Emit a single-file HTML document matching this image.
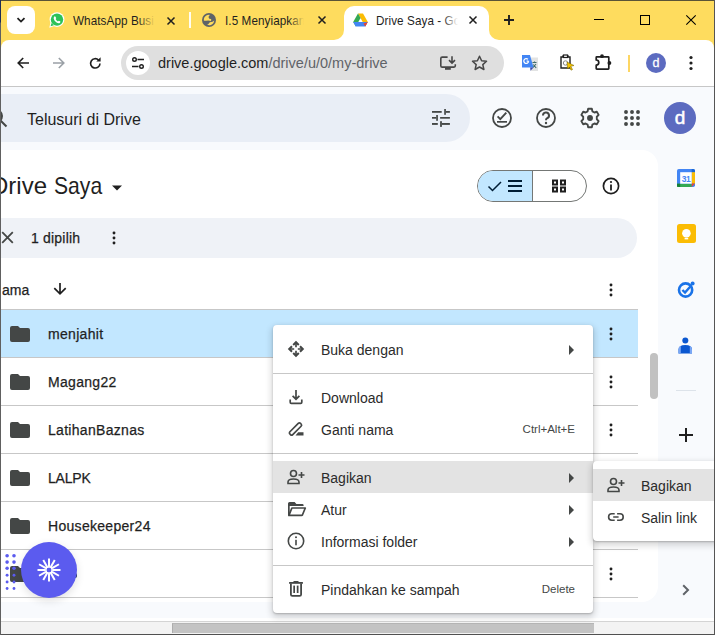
<!DOCTYPE html>
<html><head><meta charset="utf-8">
<style>
*{margin:0;padding:0;box-sizing:border-box}
html,body{width:715px;height:635px;overflow:hidden;background:#f8fafd;font-family:"Liberation Sans",sans-serif;position:relative}
.a{position:absolute}
svg{position:absolute;overflow:visible}
.t{position:absolute;white-space:nowrap;line-height:1}
.tt{font-size:13.5px;letter-spacing:0.1px;color:#1f1f1f;transform:scaleX(0.865);transform-origin:0 0}
.nm{font-size:14px;letter-spacing:0.3px;color:#1f1f1f;-webkit-text-stroke:0.25px #1f1f1f}
.mi{font-size:14px;color:#2b2b2b}
.sc{font-size:11.5px;color:#444746}
</style></head><body>

<!-- ============ TAB STRIP ============ -->
<div class="a" style="left:0;top:0;width:715px;height:50px;background:#fedc5e"></div>
<div class="a" style="left:0;top:0;width:715px;height:1px;background:#5a5436"></div>
<!-- dropdown btn -->
<div class="a" style="left:7px;top:6px;width:28px;height:28px;border-radius:8px;background:#fff"></div>
<svg style="left:15px;top:14px" width="12" height="12" viewBox="0 0 12 12"><path d="M2.5 4.2 L6 7.6 L9.5 4.2" fill="none" stroke="#1f1f1f" stroke-width="1.8"/></svg>

<!-- tab 1 whatsapp -->
<svg style="left:49px;top:12px" width="16" height="16" viewBox="0 0 16 16"><circle cx="8" cy="7.6" r="7.4" fill="#fff"/><path d="M0.3 15.7L1.5 10.5L5.3 14Z" fill="#fff"/><circle cx="8" cy="7.6" r="6.2" fill="#2cc258"/><path d="M1.6 14.3L2.5 11L4.9 13.2Z" fill="#2cc258"/><path d="M5 4.9Q5.6 4.1 6.3 4.5L7.2 6.1Q7.2 6.7 6.6 7.1Q7.4 8.8 9 9.4Q9.4 8.8 9.9 8.7L11.4 9.5Q11.6 10.4 10.8 10.9Q9.4 11.7 7.2 10.2Q5 8.6 4.7 6.6Q4.6 5.5 5 4.9Z" fill="#fff"/></svg>
<div class="t tt" style="left:73px;top:14px">WhatsApp Busi</div>
<div class="a" style="left:138px;top:8px;width:25px;height:24px;background:linear-gradient(90deg,rgba(254,220,94,0),#fedc5e 17px)"></div>
<svg style="left:167px;top:17px" width="8" height="8" viewBox="0 0 8 8"><path d="M0.5 0.5L7.5 7.5M7.5 0.5L0.5 7.5" stroke="#1f1f1f" stroke-width="1.5"/></svg>
<div class="a" style="left:189px;top:12px;width:2px;height:16px;background:#fffdf2"></div>

<!-- tab 2 globe -->
<svg style="left:202px;top:13px" width="14" height="14" viewBox="0 0 14 14"><circle cx="7" cy="7" r="7" fill="#5f6368"/><path d="M1.8 7.6Q1.6 4.2 4.3 2.5Q6 1.6 8 1.9Q6.4 2.8 6.6 4.4Q6.9 6 8.9 6.1Q9.7 6.8 8.9 7.9Q6.7 7.2 4.2 7.7Q2.8 7.9 1.8 7.6Z" fill="#fedc5e"/><path d="M12.2 7.6Q12 11 8.8 12.1Q6.6 12.6 5.1 11.8Q6.8 11.2 7.2 10.1Q7.7 8.8 9.6 9Q11.2 9 12.2 7.6Z" fill="#fedc5e"/></svg>
<div class="t tt" style="left:225px;top:14px">I.5 Menyiapkan</div>
<div class="a" style="left:289px;top:8px;width:26px;height:24px;background:linear-gradient(90deg,rgba(254,220,94,0),#fedc5e 15px)"></div>
<svg style="left:318px;top:16px" width="8" height="8" viewBox="0 0 8 8"><path d="M0.5 0.5L7.5 7.5M7.5 0.5L0.5 7.5" stroke="#1f1f1f" stroke-width="1.5"/></svg>

<!-- active tab -->
<svg style="left:334px;top:6px" width="165" height="34" viewBox="0 0 165 34"><path d="M0 34A10 10 0 0 0 10 24V10A10 10 0 0 1 20 0H145A10 10 0 0 1 155 10V24A10 10 0 0 0 165 34Z" fill="#fff"/></svg>
<svg style="left:353px;top:13px" width="15" height="14" viewBox="0 0 15 14"><path d="M5 0.5 L10 0.5 L14.8 9 L12.2 13.4 Z" fill="#fbbc04"/><path d="M5 0.5 L0.2 9 L2.8 13.4 L7.6 5Z" fill="#34a853"/><path d="M0.2 9 L14.8 9 L12.2 13.4 L2.8 13.4Z" fill="#4285f4"/><path d="M14.8 9 L12.2 13.4 L10.5 10.4Z" fill="#ea4335"/></svg>
<div class="t tt" style="left:376px;top:14px">Drive Saya - Go</div>
<div class="a" style="left:443px;top:8px;width:23px;height:24px;background:linear-gradient(90deg,rgba(255,255,255,0),#fff 15px)"></div>
<svg style="left:469px;top:16px" width="8" height="8" viewBox="0 0 8 8"><path d="M0.5 0.5L7.5 7.5M7.5 0.5L0.5 7.5" stroke="#1f1f1f" stroke-width="1.5"/></svg>

<!-- new tab -->
<svg style="left:504px;top:15px" width="10" height="10" viewBox="0 0 10 10"><path d="M5 0V10M0 5H10" stroke="#1f1f1f" stroke-width="1.9"/></svg>
<!-- window controls -->
<div class="a" style="left:594px;top:19px;width:10px;height:1px;background:#000"></div>
<div class="a" style="left:640px;top:15px;width:10px;height:10px;border:1px solid #000"></div>
<svg style="left:686px;top:15px" width="10" height="10" viewBox="0 0 10 10"><path d="M0.3 0.3L9.7 9.7M9.7 0.3L0.3 9.7" stroke="#000" stroke-width="1.1"/></svg>

<!-- ============ TOOLBAR ============ -->
<div class="a" style="left:1px;top:40px;width:713px;height:46px;background:#fff;border-radius:8px 8px 0 0"></div>
<div class="a" style="left:0;top:86px;width:715px;height:1px;background:#c7c7c7"></div>
<!-- back -->
<svg style="left:17px;top:57px" width="12" height="12" viewBox="0 0 12 12"><path d="M12 6H1.2M6.2 1L1.2 6L6.2 11" fill="none" stroke="#1f1f1f" stroke-width="1.6"/></svg>
<svg style="left:53px;top:57px" width="12" height="12" viewBox="0 0 12 12"><path d="M0 6H10.8M5.8 1L10.8 6L5.8 11" fill="none" stroke="#9aa0a6" stroke-width="1.6"/></svg>
<svg style="left:89px;top:57px" width="12" height="12" viewBox="0 0 12 12"><path d="M11 6.5 A4.7 4.7 0 1 1 9.6 3" fill="none" stroke="#1f1f1f" stroke-width="1.6"/><path d="M11.6 0.3V4.6H7.3Z" fill="#1f1f1f"/></svg>
<!-- omnibox -->
<div class="a" style="left:121px;top:46px;width:383px;height:34px;border-radius:17px;background:#dfdfdf"></div>
<div class="a" style="left:126px;top:51px;width:24px;height:24px;border-radius:12px;background:#fff"></div>
<svg style="left:131px;top:56px" width="14" height="14" viewBox="0 0 14 14"><circle cx="3.5" cy="3.5" r="1.8" fill="none" stroke="#1f1f1f" stroke-width="1.4"/><path d="M6.5 3.5H13M1 10.5H7.5" stroke="#1f1f1f" stroke-width="1.4"/><circle cx="10.5" cy="10.5" r="1.8" fill="none" stroke="#1f1f1f" stroke-width="1.4"/></svg>
<div class="t" style="left:158px;top:56px;font-size:14.5px;color:#1f1f1f">drive.google.com<span style="color:#5f6368">/drive/u/0/my-drive</span></div>
<!-- install icon -->
<svg style="left:439px;top:55px" width="18" height="16" viewBox="0 0 18 16"><path d="M8.6 2.1H3.2Q1.8 2.1 1.8 3.5V10.7Q1.8 12.1 3.2 12.1H15Q16.3 12.1 16.3 10.8V9.3" fill="none" stroke="#474747" stroke-width="1.6"/><rect x="6" y="12.8" width="5.8" height="2" fill="#474747"/><path d="M13 1.2V8M10 5.1L13 8.1L16 5.1" fill="none" stroke="#474747" stroke-width="1.6"/></svg>
<!-- star -->
<svg style="left:471px;top:55px" width="17" height="16" viewBox="0 0 17 16"><path d="M8.5 1.3L10.6 5.8L15.5 6.3L11.8 9.6L12.9 14.5L8.5 12L4.1 14.5L5.2 9.6L1.5 6.3L6.4 5.8Z" fill="none" stroke="#474747" stroke-width="1.5" stroke-linejoin="round"/></svg>
<!-- translate -->
<svg style="left:521px;top:54px" width="18" height="18" viewBox="0 0 18 18"><rect x="9.5" y="3.5" width="7.5" height="13.5" fill="#e2e3e3"/><path d="M11.5 8.5L15.5 8.5M13.5 7.5V9M12 13.5L15 10M12.3 10.5L15.2 14" stroke="#3f6b6b" stroke-width="1.1"/><path d="M1 1H9L12.5 13.6H1Z" fill="#4285f4"/><path d="M9.2 13.6H12.5L9.5 16.8Z" fill="#3949ab"/><path d="M7.6 7.2H5.6M7.6 7.2A2.4 2.4 0 1 1 6.9 5.3" fill="none" stroke="#fff" stroke-width="1.3"/></svg>
<!-- clipboard -->
<svg style="left:558px;top:54px" width="18" height="18" viewBox="0 0 18 18"><path d="M3 3H5V2H10V3H12V14H3Z" fill="none" stroke="#1f1f1f" stroke-width="1.4"/><rect x="5.5" y="1" width="4" height="2.5" fill="#fff" stroke="#1f1f1f" stroke-width="1.2"/><circle cx="7.5" cy="9" r="2.2" fill="none" stroke="#888" stroke-width="1"/><path d="M9 8L16 11.5L12.8 12.3L14.5 15.5L13 16.2L11.5 13L9.5 15Z" fill="#f5c400" stroke="#6b5a00" stroke-width="0.5"/></svg>
<!-- puzzle -->
<svg style="left:594px;top:53px" width="18" height="18" viewBox="0 0 18 18"><path d="M2.8 3.8H14.2Q14.8 3.8 14.8 4.4V15.6Q14.8 16.2 14.2 16.2H2.8Q2.2 16.2 2.2 15.6V12.2A2.6 2.6 0 0 0 2.2 7V4.4Q2.2 3.8 2.8 3.8Z" fill="none" stroke="#1f1f1f" stroke-width="1.7" stroke-linejoin="round"/><circle cx="8" cy="3.2" r="1.9" fill="#1f1f1f"/><circle cx="15.4" cy="10" r="1.9" fill="#1f1f1f"/></svg>
<div class="a" style="left:628px;top:55px;width:2px;height:17px;background:#fdd663"></div>
<div class="a" style="left:646px;top:53px;width:20px;height:20px;border-radius:10px;background:#5c6bc0"></div>
<div class="t" style="left:646px;top:57px;width:20px;text-align:center;font-size:12.5px;color:#fff;-webkit-text-stroke:0.3px #fff">d</div>
<svg style="left:688px;top:55px" width="6" height="16" viewBox="0 0 6 16"><circle cx="3" cy="2.5" r="1.6" fill="#1f1f1f"/><circle cx="3" cy="8" r="1.6" fill="#1f1f1f"/><circle cx="3" cy="13.5" r="1.6" fill="#1f1f1f"/></svg>

<!-- ============ DRIVE ============ -->
<div class="a" style="left:1px;top:87px;width:713px;height:535px;background:#f8fafd"></div>
<!-- search -->
<div class="a" style="left:-30px;top:94px;width:500px;height:48px;border-radius:24px;background:#e9eef6"></div>
<svg style="left:-12px;top:108px" width="20" height="20" viewBox="0 0 20 20"><circle cx="8" cy="8" r="6" fill="none" stroke="#444746" stroke-width="2"/><path d="M12.5 12.5L18.5 18.5" stroke="#444746" stroke-width="2"/></svg>
<div class="t" style="left:27px;top:112px;font-size:16px;color:#1f1f1f">Telusuri di Drive</div>
<svg style="left:431px;top:108px" width="20" height="20" viewBox="0 0 20 20" fill="#444746"><rect x="1" y="3" width="9.7" height="1.8"/><rect x="13.2" y="1" width="1.7" height="5.8"/><rect x="14.9" y="3" width="4" height="1.8"/><rect x="1" y="9" width="4.2" height="1.7"/><rect x="5.2" y="7" width="1.7" height="5.8"/><rect x="9.1" y="9" width="9.8" height="1.7"/><rect x="1" y="15" width="5.8" height="1.9"/><rect x="9.1" y="13.2" width="1.8" height="5.7"/><rect x="10.9" y="15" width="8" height="1.9"/></svg>
<!-- right icons -->
<svg style="left:491px;top:107px" width="22" height="22" viewBox="0 0 22 22"><circle cx="11" cy="11" r="9" fill="none" stroke="#444746" stroke-width="1.8"/><path d="M6.6 9.4L9.3 12.1L15.3 5.6" fill="none" stroke="#444746" stroke-width="1.9"/><rect x="6" y="14" width="10" height="1.7" fill="#444746"/></svg>
<svg style="left:535px;top:107px" width="22" height="22" viewBox="0 0 22 22"><circle cx="11" cy="11" r="9" fill="none" stroke="#444746" stroke-width="1.8"/><path d="M8 8.5A3 3 0 1 1 12 11.3Q11 11.8 11 13.2" fill="none" stroke="#444746" stroke-width="2"/><circle cx="11" cy="16" r="1.2" fill="#444746"/></svg>
<svg style="left:579px;top:107px" width="22" height="22" viewBox="0 0 22 22"><g transform="translate(11 11) scale(0.92) translate(-11 -11)"><path d="M9 1H13L13.6 3.8L15.8 5L18.4 4.2L20.4 7.6L18.4 9.6V12.4L20.4 14.4L18.4 17.8L15.8 17L13.6 18.2L13 21H9L8.4 18.2L6.2 17L3.6 17.8L1.6 14.4L3.6 12.4V9.6L1.6 7.6L3.6 4.2L6.2 5L8.4 3.8Z" fill="none" stroke="#444746" stroke-width="2.05" stroke-linejoin="round"/><circle cx="11" cy="11" r="3.2" fill="#444746"/></g></svg>
<svg style="left:622px;top:108px" width="20" height="20" viewBox="0 0 20 20" fill="#444746"><circle cx="4" cy="4" r="1.95"/><circle cx="10" cy="4" r="1.95"/><circle cx="16" cy="4" r="1.95"/><circle cx="4" cy="10" r="1.95"/><circle cx="10" cy="10" r="1.95"/><circle cx="16" cy="10" r="1.95"/><circle cx="4" cy="16" r="1.95"/><circle cx="10" cy="16" r="1.95"/><circle cx="16" cy="16" r="1.95"/></svg>
<div class="a" style="left:664px;top:102px;width:32px;height:32px;border-radius:16px;background:#5c6bc0"></div>
<div class="t" style="left:664px;top:108px;width:32px;text-align:center;font-size:19px;color:#fff;-webkit-text-stroke:0.5px #fff">d</div>

<!-- main white panel -->
<div class="a" style="left:-20px;top:150px;width:678px;height:452px;background:#fff;border-radius:16px"></div>
<div class="t" style="left:-9px;top:174px;font-size:24px;color:#1f1f1f">Drive</div><div class="t" style="left:54px;top:174px;font-size:24px;color:#1f1f1f;transform:scaleX(0.88);transform-origin:0 0">Saya</div>
<svg style="left:111px;top:185px" width="12" height="6" viewBox="0 0 12 6"><path d="M1 0.5H11L6 5.5Z" fill="#1f1f1f"/></svg>
<!-- view toggle -->
<div class="a" style="left:477px;top:170px;width:110px;height:32px;border-radius:16px;border:1px solid #747775;overflow:hidden;background:#fff">
  <div class="a" style="left:0;top:0;width:55px;height:30px;background:#c2e7ff;border-right:1px solid #747775"></div>
</div>
<svg style="left:487px;top:180px" width="16" height="12" viewBox="0 0 16 12"><path d="M1.5 6.5L5.5 10.5L14 2" fill="none" stroke="#001d35" stroke-width="1.5"/></svg>
<svg style="left:507px;top:179px" width="16" height="14" viewBox="0 0 16 14" fill="#001d35"><rect x="1" y="1" width="14" height="2"/><rect x="1" y="6" width="14" height="2"/><rect x="1" y="11" width="14" height="2"/></svg>
<svg style="left:551px;top:179px" width="16" height="14" viewBox="0 0 16 14" fill="none" stroke="#1f1f1f" stroke-width="2"><rect x="2" y="1.5" width="4" height="4"/><rect x="10" y="1.5" width="4" height="4"/><rect x="2" y="8.5" width="4" height="4"/><rect x="10" y="8.5" width="4" height="4"/></svg>
<svg style="left:601px;top:176px" width="20" height="20" viewBox="0 0 20 20"><circle cx="10" cy="10" r="7.6" fill="none" stroke="#1f1f1f" stroke-width="1.7"/><rect x="9.1" y="8.5" width="1.8" height="6" fill="#1f1f1f"/><circle cx="10" cy="6" r="1.1" fill="#1f1f1f"/></svg>
<!-- selection bar -->
<div class="a" style="left:-20px;top:218px;width:657px;height:40px;border-radius:20px;background:#eff2f7"></div>
<svg style="left:1px;top:231px" width="13" height="13" viewBox="0 0 13 13"><path d="M1.2 1.2L11.8 11.8M11.8 1.2L1.2 11.8" stroke="#444746" stroke-width="1.8"/></svg>
<div class="t" style="left:31px;top:231px;font-size:14px;letter-spacing:0.2px;color:#1f1f1f;-webkit-text-stroke:0.25px #1f1f1f">1 dipilih</div>
<svg style="left:111px;top:231px" width="6" height="14" viewBox="0 0 6 14"><circle cx="3" cy="2" r="1.45" fill="#1f1f1f"/><circle cx="3" cy="7" r="1.45" fill="#1f1f1f"/><circle cx="3" cy="12" r="1.45" fill="#1f1f1f"/></svg>

<!-- header -->
<div class="t" style="left:2px;top:283px;font-size:14px;color:#1f1f1f;-webkit-text-stroke:0.25px #1f1f1f">ama</div>
<svg style="left:53px;top:282px" width="14" height="14" viewBox="0 0 14 14"><path d="M7 1.1V11.5M1.3 6.2L7 11.9L12.7 6.2" fill="none" stroke="#1f1f1f" stroke-width="1.7"/></svg>
<svg style="left:608px;top:283px" width="6" height="14" viewBox="0 0 6 14"><circle cx="3" cy="2" r="1.45" fill="#1f1f1f"/><circle cx="3" cy="7" r="1.45" fill="#1f1f1f"/><circle cx="3" cy="12" r="1.45" fill="#1f1f1f"/></svg>
<div class="a" style="left:0;top:309px;width:638px;height:1px;background:#c7c7c7"></div>

<!-- rows -->
<div class="a" style="left:0;top:310px;width:638px;height:47px;background:#c2e7ff"></div>
<div class="a" style="left:0;top:357px;width:638px;height:1px;background:#c7c7c7"></div>
<svg style="left:10px;top:326px" width="20" height="16" viewBox="0 0 20 16"><path d="M2 0H8L10 2H18Q20 2 20 4V14Q20 16 18 16H2Q0 16 0 14V2Q0 0 2 0Z" fill="#444746"/></svg>
<div class="t nm" style="left:48px;top:327px">menjahit</div>
<svg style="left:608px;top:327px" width="6" height="14" viewBox="0 0 6 14"><circle cx="3" cy="2" r="1.45" fill="#1f1f1f"/><circle cx="3" cy="7" r="1.45" fill="#1f1f1f"/><circle cx="3" cy="12" r="1.45" fill="#1f1f1f"/></svg>
<div class="a" style="left:0;top:358px;width:638px;height:47px;background:#fff"></div>
<div class="a" style="left:0;top:405px;width:638px;height:1px;background:#c7c7c7"></div>
<svg style="left:10px;top:374px" width="20" height="16" viewBox="0 0 20 16"><path d="M2 0H8L10 2H18Q20 2 20 4V14Q20 16 18 16H2Q0 16 0 14V2Q0 0 2 0Z" fill="#444746"/></svg>
<div class="t nm" style="left:48px;top:375px">Magang22</div>
<svg style="left:608px;top:375px" width="6" height="14" viewBox="0 0 6 14"><circle cx="3" cy="2" r="1.45" fill="#1f1f1f"/><circle cx="3" cy="7" r="1.45" fill="#1f1f1f"/><circle cx="3" cy="12" r="1.45" fill="#1f1f1f"/></svg>
<div class="a" style="left:0;top:406px;width:638px;height:47px;background:#fff"></div>
<div class="a" style="left:0;top:453px;width:638px;height:1px;background:#c7c7c7"></div>
<svg style="left:10px;top:422px" width="20" height="16" viewBox="0 0 20 16"><path d="M2 0H8L10 2H18Q20 2 20 4V14Q20 16 18 16H2Q0 16 0 14V2Q0 0 2 0Z" fill="#444746"/></svg>
<div class="t nm" style="left:48px;top:423px">LatihanBaznas</div>
<svg style="left:608px;top:423px" width="6" height="14" viewBox="0 0 6 14"><circle cx="3" cy="2" r="1.45" fill="#1f1f1f"/><circle cx="3" cy="7" r="1.45" fill="#1f1f1f"/><circle cx="3" cy="12" r="1.45" fill="#1f1f1f"/></svg>
<div class="a" style="left:0;top:454px;width:638px;height:47px;background:#fff"></div>
<div class="a" style="left:0;top:501px;width:638px;height:1px;background:#c7c7c7"></div>
<svg style="left:10px;top:470px" width="20" height="16" viewBox="0 0 20 16"><path d="M2 0H8L10 2H18Q20 2 20 4V14Q20 16 18 16H2Q0 16 0 14V2Q0 0 2 0Z" fill="#444746"/></svg>
<div class="t nm" style="left:48px;top:471px;letter-spacing:-0.2px">LALPK</div>
<svg style="left:608px;top:471px" width="6" height="14" viewBox="0 0 6 14"><circle cx="3" cy="2" r="1.45" fill="#1f1f1f"/><circle cx="3" cy="7" r="1.45" fill="#1f1f1f"/><circle cx="3" cy="12" r="1.45" fill="#1f1f1f"/></svg>
<div class="a" style="left:0;top:502px;width:638px;height:47px;background:#fff"></div>
<div class="a" style="left:0;top:549px;width:638px;height:1px;background:#c7c7c7"></div>
<svg style="left:10px;top:518px" width="20" height="16" viewBox="0 0 20 16"><path d="M2 0H8L10 2H18Q20 2 20 4V14Q20 16 18 16H2Q0 16 0 14V2Q0 0 2 0Z" fill="#444746"/></svg>
<div class="t nm" style="left:48px;top:519px">Housekeeper24</div>
<svg style="left:608px;top:519px" width="6" height="14" viewBox="0 0 6 14"><circle cx="3" cy="2" r="1.45" fill="#1f1f1f"/><circle cx="3" cy="7" r="1.45" fill="#1f1f1f"/><circle cx="3" cy="12" r="1.45" fill="#1f1f1f"/></svg>
<div class="a" style="left:0;top:550px;width:638px;height:47px;background:#fff"></div>
<div class="a" style="left:0;top:597px;width:638px;height:1px;background:#c7c7c7"></div>
<svg style="left:10px;top:566px" width="20" height="16" viewBox="0 0 20 16"><path d="M2 0H8L10 2H18Q20 2 20 4V14Q20 16 18 16H2Q0 16 0 14V2Q0 0 2 0Z" fill="#444746"/></svg>
<svg style="left:608px;top:567px" width="6" height="14" viewBox="0 0 6 14"><circle cx="3" cy="2" r="1.45" fill="#1f1f1f"/><circle cx="3" cy="7" r="1.45" fill="#1f1f1f"/><circle cx="3" cy="12" r="1.45" fill="#1f1f1f"/></svg>

<!-- bottom of page -->
<!-- fab -->
<svg style="left:5px;top:554px" width="12" height="38" viewBox="0 0 12 38" fill="#5b5bef"><circle cx="2.1" cy="1.8" r="1.8"/><circle cx="9" cy="1.8" r="1.8"/><circle cx="2.1" cy="8.1" r="1.8"/><circle cx="9" cy="8.1" r="1.8"/><circle cx="2.1" cy="14.2" r="1.75"/><circle cx="9" cy="14.2" r="1.75"/><circle cx="2.1" cy="21.3" r="1.45"/><circle cx="9" cy="21.3" r="1.45"/><circle cx="2.1" cy="28" r="1.45"/><circle cx="9" cy="28" r="1.45"/><circle cx="2.1" cy="34.5" r="1.4"/><circle cx="9" cy="34.5" r="1.4"/></svg>
<div class="a" style="left:74px;top:573px;width:3px;height:5px;border-radius:0 2px 2px 0;background:#2a3a5a"></div>
<div class="a" style="left:21px;top:542px;width:56px;height:56px;border-radius:28px;background:#5b5bef;box-shadow:0 3px 8px rgba(0,0,0,.12)"></div>
<svg style="left:37px;top:558px" width="24" height="24" viewBox="0 0 24 24"><path d="M15.60 12.00L23.50 12.00M15.12 13.80L21.96 17.75M13.80 15.12L17.75 21.96M12.00 15.60L12.00 23.50M10.20 15.12L6.25 21.96M8.88 13.80L2.04 17.75M8.40 12.00L0.50 12.00M8.88 10.20L2.04 6.25M10.20 8.88L6.25 2.04M12.00 8.40L12.00 0.50M13.80 8.88L17.75 2.04M15.12 10.20L21.96 6.25" stroke="#fff" stroke-width="2"/><circle cx="12" cy="12" r="3.1" fill="none" stroke="#fff" stroke-width="1.6"/><circle cx="12" cy="12" r="2.3" fill="#5b5bef"/></svg>

<!-- vertical scroll thumb -->
<div class="a" style="left:650px;top:353px;width:8px;height:46px;border-radius:4px;background:#c1c1c1"></div>

<!-- side panel icons -->
<svg style="left:677px;top:169px" width="18" height="18" viewBox="0 0 18 18"><rect x="0" y="0" width="18" height="18" rx="1.8" fill="#4285f4"/><path d="M14.7 0H16.2Q18 0 18 1.8V3.2H14.7Z" fill="#1967d2"/><rect x="14.7" y="3.2" width="3.3" height="11.4" fill="#fbbc04"/><rect x="0" y="14.7" width="14.7" height="3.3" fill="#34a853"/><path d="M0 14.7H3.2V18H1.8Q0 18 0 16.2Z" fill="#188038"/><path d="M14.7 14.6H18L14.7 18Z" fill="#ea4335"/><rect x="3.2" y="3.2" width="11.5" height="11.5" fill="#fff"/><text x="9" y="12.6" font-size="8.4" text-anchor="middle" font-family="Liberation Sans" font-weight="bold" fill="#4285f4" letter-spacing="-0.4">31</text></svg>
<svg style="left:677px;top:224px" width="19" height="19" viewBox="0 0 19 19"><rect x="0" y="0" width="19" height="19" rx="2.5" fill="#fbbc04"/><circle cx="9.4" cy="9.2" r="4.3" fill="#fff"/><rect x="7.6" y="11" width="3.6" height="2.2" fill="#fff"/><rect x="7.6" y="14" width="3.6" height="1.4" fill="#fff"/></svg>
<svg style="left:677px;top:281px" width="19" height="17" viewBox="0 0 19 17"><circle cx="8.6" cy="9" r="6.6" fill="none" stroke="#1a73e8" stroke-width="2.6"/><path d="M5.4 9L8 11.5L14.5 4.2" fill="none" stroke="#1a73e8" stroke-width="2.4"/><circle cx="15.6" cy="2.6" r="2" fill="#1a73e8"/></svg>
<svg style="left:678px;top:337px" width="15" height="17" viewBox="0 0 15 17"><circle cx="7.3" cy="3.6" r="3" fill="#0b57d0"/><path d="M0.5 16.5V12.5Q0.5 8 7.3 8Q14 8 14 12.5V16.5Z" fill="#0b57d0"/><path d="M0.5 16.5V12.5Q0.5 9.5 2.8 8.7V16.5Z" fill="#7aa7f5"/><path d="M14 16.5V12.5Q14 9.5 11.8 8.7V16.5Z" fill="#7aa7f5"/></svg>
<div class="a" style="left:676px;top:390px;width:20px;height:1px;background:#dde3ea"></div>
<svg style="left:679px;top:428px" width="14" height="14" viewBox="0 0 14 14"><path d="M7 0V14M0 7H14" stroke="#1f1f1f" stroke-width="2"/></svg>
<svg style="left:682px;top:584px" width="8" height="12" viewBox="0 0 8 12"><path d="M1.2 1.2L6 6L1.2 10.8" fill="none" stroke="#5f6368" stroke-width="2"/></svg>

<!-- horizontal scrollbar -->
<div class="a" style="left:0;top:618px;width:715px;height:3px;background:#fff"></div>
<div class="a" style="left:0;top:621px;width:715px;height:1px;background:#d4d4d4"></div>
<div class="a" style="left:0;top:622px;width:715px;height:12px;background:#f3f3f3"></div>
<div class="a" style="left:172px;top:623px;width:422px;height:10px;background:#c3c3c3;border-left:1px solid #adadad;border-top:1px solid #b5b5b5"></div>

<!-- window borders -->
<div class="a" style="left:0;top:634px;width:715px;height:1px;background:#505050"></div>
<div class="a" style="left:0;top:0;width:1px;height:635px;background:linear-gradient(#1e2d55 0,#1e2d55 22px,#606060 23px)"></div>
<div class="a" style="left:714px;top:0;width:1px;height:635px;background:#555"></div>

<!-- context menu -->
<div class="a" id="menu" style="left:273px;top:325px;width:320px;height:288px;background:#fff;border-radius:4px;box-shadow:0 3px 6px 2px rgba(0,0,0,.14),0 1px 2px rgba(0,0,0,.22)"></div>
<div class="a" style="left:273px;top:461px;width:320px;height:32px;background:#e3e3e3"></div>
<div class="a" style="left:273px;top:373px;width:320px;height:1px;background:#c7c7c7"></div>
<div class="a" style="left:273px;top:453px;width:320px;height:1px;background:#c7c7c7"></div>
<div class="a" style="left:273px;top:565px;width:320px;height:1px;background:#c7c7c7"></div>
<svg style="left:288px;top:341px" width="16" height="16" viewBox="0 0 16 16" fill="none" stroke="#444746"><path d="M5.2 4L8 1.2L10.8 4M5.2 12L8 14.8L10.8 12M4 5.2L1.2 8L4 10.8M12 5.2L14.8 8L12 10.8" stroke-width="2"/><path d="M8 2V6.2M8 9.8V14M2 8H6.2M9.8 8H14" stroke-width="1.7"/></svg>
<div class="t mi" style="left:321px;top:343px">Buka dengan</div>
<svg style="left:568px;top:345px" width="7" height="10" viewBox="0 0 7 10"><path d="M1 0L6 5L1 10Z" fill="#444746"/></svg>
<svg style="left:288px;top:389px" width="16" height="16" viewBox="0 0 16 16" fill="none" stroke="#444746"><path d="M8 1V10M4.6 6.8L8 10.2L11.4 6.8" stroke-width="1.7"/><path d="M2.2 10.5V13.2Q2.2 14.3 3.3 14.3H12.7Q13.8 14.3 13.8 13.2V10.5" stroke-width="1.7"/></svg>
<div class="t mi" style="left:321px;top:391px">Download</div>
<svg style="left:288px;top:421px" width="16" height="16" viewBox="0 0 16 16"><g transform="rotate(-45 7.5 8)"><rect x="0" y="6" width="15" height="4" rx="1.6" fill="none" stroke="#444746" stroke-width="1.7"/></g><path d="M7.5 14.5L10.2 11.3H15.5V14.5Z" fill="#444746"/></svg>
<div class="t mi" style="left:321px;top:423px">Ganti nama</div>
<div class="t sc" style="right:140px;top:424px">Ctrl+Alt+E</div>
<svg style="left:287px;top:469px" width="18" height="16" viewBox="0 0 18 16"><circle cx="6.5" cy="4.5" r="3" fill="none" stroke="#444746" stroke-width="1.6"/><path d="M1 14.5V13Q1 10 6.5 10Q12 10 12 13V14.5Z" fill="none" stroke="#444746" stroke-width="1.6"/><path d="M14.5 3V9M11.5 6H17.5" stroke="#444746" stroke-width="1.6"/></svg>
<div class="t mi" style="left:321px;top:471px">Bagikan</div>
<svg style="left:568px;top:473px" width="7" height="10" viewBox="0 0 7 10"><path d="M1 0L6 5L1 10Z" fill="#444746"/></svg>
<svg style="left:287px;top:501px" width="20" height="16" viewBox="0 0 20 16"><path d="M1 2.6Q1 1.1 2.5 1.1H7.6L9.4 3H15.4Q16.6 3 16.6 4.2V5H2.7V14.4H1Z" fill="#444746"/><path d="M1.9 14.4L4.9 7H18.3L15.5 13.8Q15.2 14.4 14.6 14.4Z" fill="none" stroke="#444746" stroke-width="1.7" stroke-linejoin="round"/></svg>
<div class="t mi" style="left:321px;top:503px">Atur</div>
<svg style="left:568px;top:505px" width="7" height="10" viewBox="0 0 7 10"><path d="M1 0L6 5L1 10Z" fill="#444746"/></svg>
<svg style="left:287px;top:532px" width="18" height="18" viewBox="0 0 18 18"><circle cx="9" cy="9" r="7.7" fill="none" stroke="#444746" stroke-width="1.6"/><rect x="8.2" y="7.8" width="1.6" height="5.5" fill="#444746"/><circle cx="9" cy="5.3" r="1" fill="#444746"/></svg>
<div class="t mi" style="left:321px;top:535px">Informasi folder</div>
<svg style="left:568px;top:537px" width="7" height="10" viewBox="0 0 7 10"><path d="M1 0L6 5L1 10Z" fill="#444746"/></svg>
<svg style="left:288px;top:580px" width="16" height="18" viewBox="0 0 16 18"><rect x="1.1" y="2" width="13.8" height="1.8" fill="#444746"/><path d="M5 2.2L5.8 1H10.2L11 2.2Z" fill="#444746"/><path d="M2.9 3.5V14.4Q2.9 15.9 4.4 15.9H11.6Q13.1 15.9 13.1 14.4V3.5" fill="none" stroke="#444746" stroke-width="1.8"/><rect x="5.3" y="5.6" width="1.7" height="7.4" fill="#444746"/><rect x="8.8" y="5.6" width="1.7" height="7.4" fill="#444746"/></svg>
<div class="t mi" style="left:321px;top:583px">Pindahkan ke sampah</div>
<div class="t sc" style="right:140px;top:584px">Delete</div>
<div class="a" style="left:593px;top:461px;width:140px;height:80px;background:#fff;border-radius:4px;box-shadow:0 3px 6px 2px rgba(0,0,0,.14),0 1px 2px rgba(0,0,0,.22)"></div>
<div class="a" style="left:593px;top:469px;width:140px;height:32px;background:#e3e3e3"></div>
<svg style="left:607px;top:477px" width="18" height="16" viewBox="0 0 18 16"><circle cx="6.5" cy="4.5" r="3" fill="none" stroke="#444746" stroke-width="1.6"/><path d="M1 14.5V13Q1 10 6.5 10Q12 10 12 13V14.5Z" fill="none" stroke="#444746" stroke-width="1.6"/><path d="M14.5 3V9M11.5 6H17.5" stroke="#444746" stroke-width="1.6"/></svg>
<div class="t mi" style="left:641px;top:479px">Bagikan</div>
<svg style="left:607px;top:512px" width="18" height="10" viewBox="0 0 18 10"><path d="M7.7 1.8H4.8A3.2 3.2 0 0 0 4.8 8.2H7.7M10.1 1.8H13A3.2 3.2 0 0 1 13 8.2H10.1M6.2 5H11.6" fill="none" stroke="#444746" stroke-width="1.6"/></svg>
<div class="t mi" style="left:641px;top:511px">Salin link</div>
<div class="a" style="left:714px;top:0;width:1px;height:635px;background:#555"></div>

</body></html>
